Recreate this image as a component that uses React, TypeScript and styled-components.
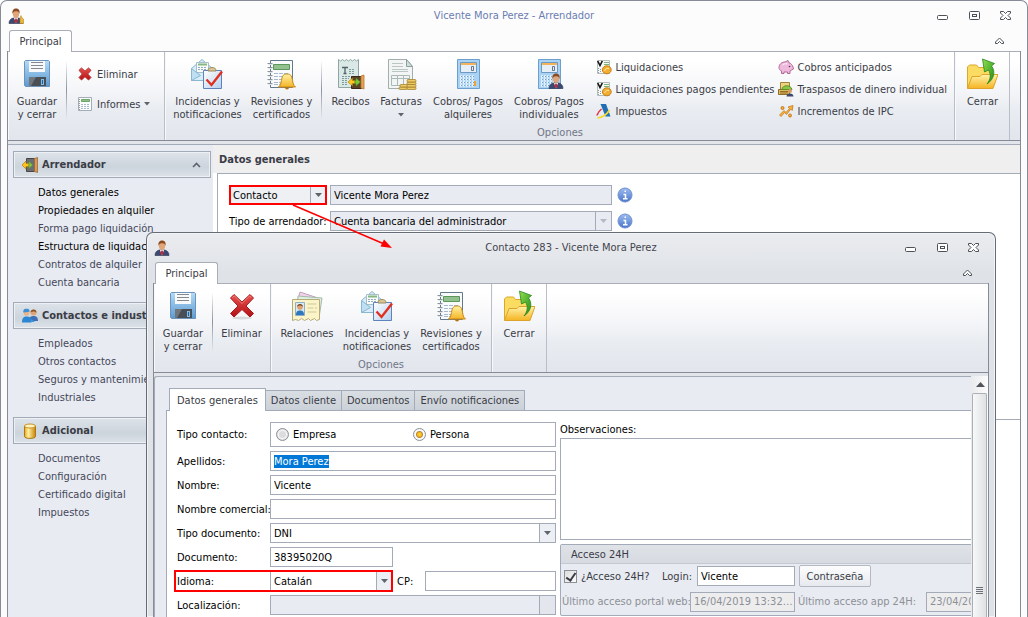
import React, { useEffect, useRef } from "react";
import styled, { createGlobalStyle, css } from "styled-components";

const line = "#a3abb8";
const frameLine = "#878b97";
const ink = "#3a3c46";

const GlobalStyle = createGlobalStyle`
  * { box-sizing: border-box; }
  body {
    margin: 0;
    background: #fff;
    color: ${ink};
    font: 11px/13px "DejaVu Sans Condensed", "Noto Sans", sans-serif;
  }
  button, input, select, textarea { font: inherit; color: inherit; margin: 0; }
  ::selection { background: #0078d7; color: #fff; }
`;

/* ---------- window chrome ---------- */

const Desktop = styled.div`
  position: relative;
  display: flex;
  min-height: 100vh;
  overflow: hidden;
`;

const Frame = styled.section<{ $dialog?: boolean }>`
  display: flex;
  flex-direction: column;
  min-width: 0;
  padding: 0 6px;
  border: 1px solid ${frameLine};
  border-bottom: 0;
  border-radius: 7px 7px 0 0;
  background: #fcfcfd;
  ${(p) =>
    p.$dialog
      ? css`
          position: absolute;
          top: 232px;
          left: 146px;
          right: 32px;
          bottom: 0;
          overflow: hidden;
          border-color: #666c76;
          background: linear-gradient(#ebecf0, #dfe3e7 40px);
          box-shadow: inset 0 0 0 1px #f3f4f7;
        `
      : css`
          flex: 1;
        `}
`;

const TitleBar = styled.header`
  display: grid;
  grid-template-columns: 90px 1fr 90px;
  align-items: center;
  height: 29px;
`;

const TitleText = styled.h1<{ $dialog?: boolean }>`
  margin: 0;
  font-size: 11px;
  font-weight: normal;
  text-align: center;
  color: ${(p) => (p.$dialog ? "#43454f" : "#6b7db1")};
`;

const AppIcon = styled.span`
  padding-left: 1px;
  line-height: 0;
`;

const WindowButtons = styled.div`
  display: flex;
  justify-content: flex-end;
  gap: 16px;
  padding-right: 8px;
`;

const GlyphButton = styled.button`
  display: flex;
  padding: 0;
  border: 0;
  background: none;
`;

const TabStrip = styled.nav`
  display: flex;
  justify-content: space-between;
  align-items: center;
  height: 21px;
  padding: 0 16px 0 2px;
`;

const RibbonTab = styled.button`
  z-index: 1;
  height: 22px;
  width: 63px;
  padding: 0;
  margin-bottom: -1px;
  border: 1px solid #a9adb8;
  border-bottom: 0;
  border-radius: 3px 3px 0 0;
  background: #fff;
`;

const Client = styled.div`
  display: flex;
  flex-direction: column;
  flex: 1;
  min-height: 0;
  border: solid ${frameLine};
  border-width: 0 1px;
  background: #e2e5ea;
`;

/* ---------- ribbon ---------- */

const Ribbon = styled.div`
  display: flex;
  flex: none;
  height: 90px;
  border: solid ${frameLine};
  border-width: 1px 0;
  border-top-color: #a9adb8;
  background: linear-gradient(#fff 10%, #f4f5f8 45%, #e9ecf1 65%, #e2e5eb);
`;

const RibbonGroup = styled.div`
  display: flex;
  flex-direction: column;
  justify-content: space-between;
  flex: none;
  padding-bottom: 1px;
  border-right: 1px solid #b9bec8;
  box-shadow: inset 1px 0 #f8f9fb;
`;

const RibbonItems = styled.div`
  display: flex;
  height: 72px;
  padding: 6px 4px 0;
`;

const GroupCaption = styled.div`
  text-align: center;
  color: #6f7688;
`;

const BigButton = styled.button<{ $width: number }>`
  display: flex;
  flex-direction: column;
  align-items: center;
  gap: 5px;
  flex: none;
  width: ${(p) => p.$width}px;
  padding: 0;
  border: 0;
  background: none;
  white-space: pre;
  svg { flex: none; }
`;

const Separator = styled.span`
  flex: none;
  width: 1px;
  height: 60px;
  margin: 2px 4px 0;
  background: linear-gradient(transparent, #8d93a0 50%, transparent);
`;

const SmallColumn = styled.div`
  display: flex;
  flex-direction: column;
  align-items: flex-start;
  gap: 14px;
  padding: 8px 10px 0 7px;
`;

const CommandGrid = styled.div`
  display: grid;
  grid-template-columns: 182px 172px;
  grid-auto-rows: 22px;
  align-items: center;
  padding: 0 0 0 7px;
  margin-top: -2px;
`;

const SmallButton = styled.button`
  display: flex;
  align-items: center;
  gap: 3px;
  height: 16px;
  padding: 0;
  border: 0;
  background: none;
  white-space: nowrap;
  svg { flex: none; }
`;

const MenuMark = styled.span`
  display: flex;
  padding-left: 1px;
`;

/* ---------- main window body ---------- */

const Workspace = styled.div`
  display: grid;
  grid-template-columns: 205px 1fr;
  flex: 1;
  margin-top: 3px;
  border-top: 1px solid ${line};
  background: #fff;
`;

const Sidebar = styled.aside`
  padding: 6px 2px 0 5px;
  background: #e8ebf1;
`;

const NavHeader = styled.h2`
  display: flex;
  align-items: center;
  gap: 4px;
  height: 27px;
  margin: 0 0 6px;
  padding: 0 9px 0 8px;
  border: 1px solid ${line};
  background: linear-gradient(#dde3e9, #ccd4dc 60%, #dce2e8);
  box-shadow: inset 0 0 0 1px #eef1f4;
  font-size: 11px;
  white-space: nowrap;
  overflow: hidden;
  svg { flex: none; }
  svg:last-child:not(:first-child) { margin-left: auto; }
`;

const NavList = styled.ul`
  margin: 0 0 10px;
  padding: 0 0 0 25px;
  list-style: none;
`;

const NavLink = styled.a<{ $strong?: boolean }>`
  display: block;
  line-height: 18px;
  white-space: nowrap;
  text-decoration: none;
  color: ${(p) => (p.$strong ? "#000" : "#45475a")};
`;

const Main = styled.main`
  display: flex;
  flex-direction: column;
  padding-left: 4px;
  background: linear-gradient(#efefef 28px, #fff 28px);
`;

const MainTitle = styled.h2`
  height: 28px;
  margin: 0;
  padding-left: 2px;
  font-size: 11px;
  line-height: 30px;
`;

const MainPanel = styled.div`
  display: grid;
  grid-template-columns: 98px 282px 18px;
  grid-auto-rows: 20px;
  gap: 6px 3px;
  align-content: start;
  align-items: center;
  min-height: 247px;
  padding: 11px 0 0 11px;
  border: solid ${line};
  border-width: 1px 0 1px 1px;
  color: #000;
  > svg { justify-self: end; }
`;

/* ---------- form controls ---------- */

const fieldSkin = css<{ $muted?: boolean }>`
  width: 100%;
  min-width: 0;
  height: 20px;
  padding: 0 3px;
  border: 1px solid ${line};
  border-radius: 0;
  outline: 0;
  background: ${(p) => (p.$muted ? "#e8ebf1" : "#fff")};
  color: #000;
`;

const TextBox = styled.input<{ $muted?: boolean }>`
  ${fieldSkin}
  &:disabled {
    padding-right: 0;
    background: #ededee;
    color: #8d9097;
    text-overflow: ellipsis;
  }
`;

const SelectWrap = styled.span<{ $faded?: boolean }>`
  display: grid;
  width: 100%;
  > * { grid-area: 1 / 1; }
  > svg {
    justify-self: end;
    width: 17px;
    height: 20px;
    pointer-events: none;
    color: ${(p) => (p.$faded ? "#b4b8c0" : "#5f646d")};
  }
`;

const SelectBox = styled.select<{ $muted?: boolean; $tone?: string }>`
  ${fieldSkin}
  appearance: none;
  background: linear-gradient(
    to left,
    ${(p) => (p.$muted ? "#e8ebf1" : "#eceff3")} 15px,
    ${line} 15px,
    ${line} 16px,
    ${(p) => p.$tone ?? (p.$muted ? "#e8ebf1" : "#fff")} 16px
  );
`;

const Highlight = styled.span<{ $inset: string }>`
  position: absolute;
  inset: ${(p) => p.$inset};
  border: 2px solid #f00;
  pointer-events: none;
`;

const Anchor = styled.div`
  position: relative;
  display: flex;
`;

/* ---------- dialog body ---------- */

const DialogBody = styled.div`
  display: flex;
  flex: 1;
  min-height: 0;
  margin-top: 3px;
`;

const Viewport = styled.div`
  flex: 1;
  min-width: 0;
  overflow: hidden;
  padding: 11px 0 0 11px;
  border: 1px solid ${line};
  border-width: 1px 0 0 1px;
  border-top-left-radius: 3px;
  background: #e8ebf1;
`;

const PageTabs = styled.div`
  display: flex;
  align-items: flex-end;
  padding-left: 3px;
`;

const PageTab = styled.button<{ $active?: boolean }>`
  z-index: ${(p) => (p.$active ? 1 : 0)};
  height: ${(p) => (p.$active ? 23 : 20)}px;
  margin: 0 -1px ${(p) => (p.$active ? -1 : 0)}px 0;
  padding: 0 ${(p) => (p.$active ? 7 : 5)}px;
  border: 1px solid ${line};
  border-bottom: 0;
  white-space: nowrap;
  background: ${(p) => (p.$active ? "#fff" : "linear-gradient(#d9dee3, #cbd1d8)")};
`;

const Page = styled.div`
  display: flex;
  align-items: flex-start;
  gap: 4px;
  width: max-content;
  min-height: 100%;
  padding: 11px 0 0 10px;
  border: 1px solid ${line};
  background: #fff;
  color: #000;
`;

const FormColumn = styled.div`
  display: flex;
  flex-direction: column;
  gap: 4px;
  width: 379px;
`;

const Field = styled.div`
  display: grid;
  grid-template-columns: 93px 1fr;
  align-items: center;
`;

const FieldLabel = styled.label`
  white-space: nowrap;
`;

const Short = styled.div`
  width: 123px;
`;

const SplitRow = styled.div`
  display: grid;
  grid-template-columns: 123px 24px 131px;
  gap: 0 4px;
  align-items: center;
`;

const RadioBox = styled.div`
  display: flex;
  height: 25px;
  padding: 0 5px;
  border: 1px solid ${line};
`;

const RadioLabel = styled.label`
  display: flex;
  align-items: center;
  gap: 4px;
  flex: 1;
`;

const Radio = styled.input`
  appearance: none;
  width: 13px;
  height: 13px;
  border: 1px solid #8d9096;
  border-radius: 50%;
  background: radial-gradient(#dcdcdc 3px, #f5f5f5 4px, #d0d2d5 6px);
  &:checked {
    background: radial-gradient(#ffd84a 0, #f6b81c 2px, #b5863a 3px, #fff 4px, #f0f1f3 6px);
  }
`;

const BrowseField = styled.div`
  display: grid;
  grid-template-columns: 1fr 16px;
`;

const BrowseButton = styled.button`
  height: 20px;
  width: 17px;
  margin-left: -1px;
  border: 1px solid ${line};
  background: #e3e7ed;
`;

const SideColumn = styled.div`
  display: flex;
  flex-direction: column;
  width: 560px;
`;

const Notes = styled.textarea`
  ${fieldSkin}
  height: 102px;
  margin-bottom: 4px;
  resize: none;
  display: block;
`;

const NotesLabel = styled.label`
  line-height: 16px;
`;

const AccessGroup = styled.fieldset`
  margin: 0;
  padding: 0;
  min-width: 0;
  border: 1px solid ${line};
  border-radius: 2px;
  background: #e8ebf1;
  color: ${ink};
`;

const AccessTitle = styled.div`
  height: 19px;
  padding-left: 10px;
  line-height: 19px;
  border-bottom: 1px solid #c4c9d1;
  background: linear-gradient(#dfe3e8, #d7dbe1);
`;

const AccessRow = styled.div<{ $dim?: boolean }>`
  display: grid;
  grid-template-columns: ${(p) => (p.$dim ? "125px 105px 125px 105px" : "94px 31px 98px 72px")};
  gap: 0 ${(p) => (p.$dim ? 3 : 4)}px;
  align-items: center;
  height: ${(p) => (p.$dim ? 27 : 24)}px;
  padding: 0 1px 0 ${(p) => (p.$dim ? 1 : 3)}px;
  white-space: nowrap;
  color: ${(p) => (p.$dim ? "#8d9097" : "inherit")};
`;

const CheckLabel = styled.label`
  display: flex;
  align-items: center;
  gap: 4px;
`;

const CheckBox = styled.input`
  appearance: none;
  display: grid;
  place-items: center;
  width: 13px;
  height: 13px;
  border: 1px solid #8d9096;
  background: linear-gradient(135deg, #dcdcdc, #fbfbfb);
  &:checked::after {
    content: "";
    width: 4px;
    height: 8px;
    margin-bottom: 2px;
    border: solid #3a3c46;
    border-width: 0 2px 2px 0;
    transform: rotate(35deg);
  }
`;

const PlainButton = styled.button`
  height: 22px;
  padding: 0;
  border: 1px solid #b3b8c2;
  border-radius: 2px;
  background: linear-gradient(#fdfdfe, #e6e9ee);
`;

const ScrollTrack = styled.div`
  display: flex;
  flex-direction: column;
  flex: none;
  width: 17px;
  padding-left: 1px;
  background: linear-gradient(to right, #e9eaec, #fcfcfc);
`;

const ScrollUp = styled.button`
  display: grid;
  place-items: center;
  height: 17px;
  padding: 0;
  border: 0;
  background: none;
`;

const ScrollThumb = styled.div`
  flex: 1;
  width: 15px;
  padding: 193px 3px 0;
  border: 1px solid #abb0b8;
  border-bottom: 0;
  border-radius: 2px 2px 0 0;
  background: linear-gradient(to right, #f7f8f8, #dfe1e3);
  line-height: 0;
`;

const Callout = styled.svg`
  position: absolute;
  left: 285px;
  top: 200px;
  pointer-events: none;
`;

const GradientDefs = styled.svg`
  position: absolute;
`;

/* ---------- icons ---------- */

const Defs = () => (
  <GradientDefs width="0" height="0" aria-hidden="true">
    <defs>
      <linearGradient id="gBlue" x1="0" y1="0" x2="0" y2="1">
        <stop offset="0" stopColor="#b4dbf6" />
        <stop offset="1" stopColor="#5c9ad2" />
      </linearGradient>
      <linearGradient id="gPale" x1="0" y1="0" x2="1" y2="1">
        <stop offset="0" stopColor="#ffffff" />
        <stop offset="1" stopColor="#b4d0f0" />
      </linearGradient>
      <linearGradient id="gGold" x1="0" y1="0" x2="0" y2="1">
        <stop offset="0" stopColor="#fff3a6" />
        <stop offset="1" stopColor="#f5b324" />
      </linearGradient>
      <linearGradient id="gGoldH" x1="0" y1="0" x2="1" y2="0">
        <stop offset="0" stopColor="#e8a81e" />
        <stop offset=".35" stopColor="#fff0a0" />
        <stop offset="1" stopColor="#c98408" />
      </linearGradient>
      <linearGradient id="gGreen" x1="0" y1="0" x2="1" y2="1">
        <stop offset="0" stopColor="#8fe04a" />
        <stop offset="1" stopColor="#1d8a1a" />
      </linearGradient>
      <linearGradient id="gRed" x1="0" y1="0" x2="0" y2="1">
        <stop offset="0" stopColor="#e8524e" />
        <stop offset="1" stopColor="#b30f14" />
      </linearGradient>
      <linearGradient id="gInfo" x1="0" y1="0" x2="0" y2="1">
        <stop offset="0" stopColor="#9dbdf0" />
        <stop offset="1" stopColor="#4a76ca" />
      </linearGradient>
    </defs>
  </GradientDefs>
);

const Svg = ({ s = 32, children }: { s?: number; children: React.ReactNode }) => (
  <svg width={s} height={s} viewBox={`0 0 ${s} ${s}`} fill="none" aria-hidden="true">
    {children}
  </svg>
);

const SaveIcon = () => (
  <Svg>
    <path d="M4.500 2.500h23l1 1v25h-24l-1-1v-24z" fill="url(#gBlue)" stroke="#6c93bb" />
    <path d="M8 3h16v11H8z" fill="#f8f9fa" />
    <path d="M10 4.500h12M10 7.500h12M10 10.500h12" stroke="#85898e" />
    <path d="M8 19h17v9H8z" fill="#4a4f55" />
    <path d="M8 19h7l-5 9H8z" fill="#71767c" />
    <path d="M20 21h3v6h-3z" fill="#7dbdf0" />
    <path d="M21 22h1v4h-1z" fill="#2b5d8a" />
  </Svg>
);

const CrossIcon = () => (
  <Svg>
    <ellipse cx="16" cy="28" rx="10" ry="1.500" fill="#000" opacity=".12" />
    <path
      d="M8 4.500l8 7.500 8-7.500 3.500 3.500-7.500 8 7.500 7.500-3.500 3.500-8-7.500-8 7.500-3.500-3.500 7.500-7.500-7.500-8z"
      fill="url(#gRed)"
      stroke="#a8181c"
      strokeLinejoin="round"
    />
    <path d="M6.500 7.500l2-1.500 7.500 7.500 7.500-7.500 2 1.500" stroke="#f59a94" opacity=".7" />
  </Svg>
);

const DeleteSmall = () => (
  <Svg s={16}>
    <path d="M3.500 2L7 5.200 10.500 2 13 4.300 9.700 8 13 11.500 10.500 14 7 10.700 3.500 14 1 11.500 4.300 8 1 4.300z" fill="url(#gRed)" stroke="#b3302e" />
  </Svg>
);

const ReportIcon = () => (
  <Svg s={16}>
    <path d="M.5 1.500h13v13H.5z" fill="#fbfcfd" stroke="#a3adb8" />
    <path d="M3.500 3.500h8v2h-8z" fill="#8fbf8a" stroke="#6ba568" />
    <path d="M3 8.500h9M3 10.500h9M3 12.500h9" stroke="#a9b8cb" strokeDasharray="2 1" />
    <path d="M1.500 3v11" stroke="#999" strokeDasharray="1 1" />
  </Svg>
);

const MailCheckIcon = () => (
  <Svg>
    <path d="M.5 10.500L11 1.500l10.500 9v12H.5z" fill="#d7eefa" stroke="#8ab6d0" />
    <path d="M5.500 4.500h12v10h-12z" fill="#f8fbf8" stroke="#a5c0cc" />
    <path d="M7 6.500h9" stroke="#86b683" strokeWidth="2" />
    <path d="M7 9.500h9M7 11.500h9" stroke="#93abc0" strokeDasharray="2 1" />
    <path d="M.5 10.500l9 7-9 5zM21.500 10.500l-8 6.500" fill="#bfe0f3" stroke="#8ab6d0" />
    <path d="M12.500 12.500h18v18h-18z" fill="url(#gPale)" stroke="#5f82bc" />
    <path d="M17 13c0-3 2-3.500 4-3.500s4 .5 4 3.500z" fill="#d9c795" stroke="#9c8b5c" />
    <path d="M15.500 21.500l5 5.500L31 13.500" stroke="#e0301f" strokeWidth="2.400" />
  </Svg>
);

const BellReportIcon = () => (
  <Svg>
    <path d="M5.500 2.500h22v27h-22z" fill="#f8fafc" stroke="#64788c" />
    <path d="M2.500 5.500h5M2.500 9.500h5M2.500 13.500h5M2.500 17.500h5M2.500 21.500h5M2.500 25.500h5" stroke="#8a949d" />
    <path d="M3.500 6.500h4M3.500 10.500h4M3.500 14.500h4M3.500 18.500h4M3.500 22.500h4M3.500 26.500h4" stroke="#dfe3e7" />
    <path d="M8.500 6.500h16v5h-16z" fill="#93c08f" stroke="#5a9759" />
    <path d="M9 15.500h15M9 18.500h15M9 21.500h15M9 24.500h15M9 26.500h15" stroke="#a6b9cf" strokeDasharray="4 1" />
    <path d="M13.500 29c3-2 2.500-6 3.500-9 1-3.500 2.500-4 5-4s4 .5 5 4c1 3 .5 7 3.500 9z" fill="url(#gGold)" stroke="#c98a18" />
    <path d="M20 29.500a2 2 0 0 0 4 0z" fill="#b4730c" />
  </Svg>
);

const ReceiptIcon = () => (
  <Svg>
    <path d="M4.500 1.500l2 1.500 2-1.500 2 1.500 2-1.500 2 1.500 2-1.500 2 1.500 2-1.500 2 1.500 2-1.500v28h-20z" fill="#dbe9e6" stroke="#8fa5a3" />
    <path d="M8 9.500h6M11 9.500v6M9.500 15.500h3" stroke="#4d6468" strokeWidth="1.300" />
    <path d="M15 11.500h6M15 13.500h6M15 15.500h6M8 18.500h13M8 20.500h7M8 22.500h6M8 24.500h6M8 26.500h6" stroke="#7f9c9c" strokeDasharray="2 1" />
    <path d="M17.500 18.500h10v12h-10z" fill="#5a4228" stroke="#3a2818" />
    <path d="M27 18l3-1v14l-3-1z" fill="#e8a256" stroke="#b87633" strokeWidth=".8" />
    <path d="M14 24l4.500-4v2.500h2.500v3h-2.500V28z" fill="#ffc522" stroke="#a97a0c" strokeWidth=".6" />
    <path d="M21 22.500h1V20l4.500 4-4.500 4v-2.500h-1z" fill="#7cc73a" stroke="#4f8a20" strokeWidth=".6" />
  </Svg>
);

const InvoiceIcon = () => (
  <Svg>
    <path d="M3.500 1.500h18l6 7v22h-24z" fill="#f3f5f4" stroke="#a3afad" />
    <path d="M21.500 1.500v7h6z" fill="#cfe0dc" stroke="#8ba09c" />
    <path d="M7 5.500h11M7 8.500h11M7 11.500h16M7 13.500h16" stroke="#b9c6c3" />
    <path d="M6.500 17.500h18v10h-18zM6.500 20.500h18M12.500 17.500v10M18.500 17.500v10" stroke="#aab9b6" />
    <g fill="#edc963" stroke="#9c7a28" strokeWidth=".7">
      <rect x="14" y="29" width="8" height="2.500" rx="1" />
      <rect x="15" y="26.500" width="8" height="2.500" rx="1" />
      <rect x="22" y="29" width="9" height="2.500" rx="1" />
      <rect x="22" y="26.500" width="9" height="2.500" rx="1" />
      <rect x="22" y="24" width="9" height="2.500" rx="1" />
      <rect x="22" y="21.500" width="9" height="2.500" rx="1" />
    </g>
  </Svg>
);

const CalcBody = () => (
  <>
    <path d="M5.500 1.500h22v29h-22z" fill="#a9d2f3" stroke="#6b9fd0" />
    <path d="M8.500 4.500h16v10h-16z" fill="#e6eff7" stroke="#6f98c2" />
    <path d="M9 5h15v2H9z" fill="#f3b25c" />
    <path d="M19.500 8.500h2v4h-2z" stroke="#66758c" />
    <path d="M8 18.500h15M8 21.500h15M8 24.500h15M8 27.500h15" stroke="#fff" strokeWidth="2" strokeDasharray="2 1" />
    <path d="M9 18.500h15M9 21.500h15M9 24.500h15M9 27.500h15" stroke="#6da0d2" strokeDasharray="1 2" />
    <path d="M22 23h2v5h-2z" fill="#f2a233" />
  </>
);

const Person = ({ coin }: { coin?: boolean }) => (
  <>
    <path d="M1 15.500c0-3.500 2-5 4.500-5.500h5c2.500.5 4.500 2 4.500 5.500z" fill="#3b4a72" stroke="#28324f" strokeWidth=".6" />
    <path d="M6 10h4l-2 5.500z" fill="#fff" />
    <path d="M7.300 10.500h1.400l.6 3-1.300 2-1.300-2z" fill="#d3222a" />
    <ellipse cx="8" cy="5.500" rx="3.200" ry="4.300" fill="#e2a578" />
    <path d="M4.500 6C4 1.800 5.800.5 8 .5s4.200 1.200 3.500 5.500C11 3.800 10 3.200 8 3.300 6 3.200 5 4 4.500 6z" fill="#8a4b22" />
    {coin && <path d="M12 15.500V10l1-2.500 1 2.500 1.500 1v4.500z" fill="#eab93c" stroke="#b07f1a" strokeWidth=".5" />}
  </>
);

const PersonIcon = ({ coin }: { coin?: boolean }) => (
  <Svg s={16}>
    <Person coin={coin} />
  </Svg>
);

const CalcIcon = ({ person }: { person?: boolean }) => (
  <Svg>
    <CalcBody />
    {person && (
      <g transform="translate(15 15)">
        <Person />
      </g>
    )}
  </Svg>
);

const FolderIcon = () => (
  <Svg>
    <path d="M1.500 30V9l2-2h7l2 2.500h12.500V30z" fill="#fbdc62" stroke="#d9a82c" />
    <path d="M1.500 30.500L6 18.500h8l2-2h16l-5 14z" fill="url(#gGold)" stroke="#dea32a" />
    <path d="M21 26c4-5 4-10 1.500-14l-4 2L16.500 1l12 4.500-3 2.500c4 5 3 13-4.500 18z" fill="url(#gGreen)" stroke="#2b831f" strokeWidth=".8" />
  </Svg>
);

const ContactsIcon = () => (
  <Svg>
    <path d="M9 2l18 6-5 17L4 19z" fill="#f3d3ea" stroke="#bfa3bb" />
    <path d="M7 6l24 2-3 20-22-4z" fill="#dff0e2" stroke="#a6b9a9" />
    <path d="M1.500 9.500h27v20l-3 1-2-2-4 2-2-2-4 2-3-2-3 2-3-1-3 1z" fill="#fbf4c8" stroke="#b5ab78" />
    <path d="M4.500 12.500h9v13h-9z" fill="#d4eaf8" stroke="#8db0c6" />
    <path d="M5 25c0-4 2-4.500 4-4.500s4 .5 4 4.500z" fill="#2f77bd" />
    <circle cx="9" cy="17" r="2.800" fill="#e0a070" />
    <path d="M6 17c0-4 6-4 6 0-1-2-5-2-6 0z" fill="#7c451d" />
    <path d="M16.500 14h9M16.500 18h6M24 18h2M16.500 22h9" stroke="#cfc796" />
  </Svg>
);

const SettleIcon = () => (
  <Svg s={16}>
    <path d="M1.500 1.500h12v13h-12z" fill="#f5f8f6" stroke="#b4bdb9" />
    <path d="M1.700 2l2.300 4.500L6.300 2" stroke="#111" strokeWidth="1.600" />
    <path d="M8 3.500h5M8 5.500h5" stroke="#7db27b" />
    <path d="M2.500 9v6M4 10.500h2M4 12.500h2" stroke="#8d9aa2" strokeDasharray="1 1" />
    <ellipse cx="10.800" cy="10.800" rx="4.400" ry="4" fill="#f5ad30" stroke="#c07d18" />
    <path d="M8.500 12c1-2.500 3-3 4.500-2.500" stroke="#fff0b0" />
  </Svg>
);

const TaxIcon = () => (
  <Svg s={16}>
    <path d="M4.500 1h5.500L14.500 13.500H9.500z" fill="#1f6fb2" />
    <path d="M.800 12.500C2 9.500 3.500 7.500 5.500 6" stroke="#e23340" strokeWidth="1.500" />
    <path d="M1.500 15c5-.5 9-3 12-8" stroke="#f4d928" strokeWidth="1.600" />
  </Svg>
);

const PigIcon = () => (
  <Svg s={16}>
    <path d="M1 8.500C1 5 4 3 7 3l3-1.500.8 2C13 4.500 14.500 6 15 8l.5 2-1.800 1-1.700 1v2.500H9.500V13H6v1.500H3.500V12C2 11.500 1 10 1 8.500z" fill="#efb9dc" stroke="#b06a98" />
    <path d="M4.500 6c1-1 3-1.500 4.500-1" stroke="#fff" />
    <circle cx="11.500" cy="7.500" r=".8" fill="#5f2c50" />
  </Svg>
);

const TransferIcon = () => (
  <Svg s={16}>
    <path d="M2.500 1.500h9v7h-9z" fill="#ecd47d" stroke="#a4803a" />
    <path d="M.5 8.500h11v5H.5z" fill="#dfbc5e" stroke="#8f6b26" />
    <path d="M2 10.500h8M2 12h8" stroke="#8f6b26" />
    <path d="M4 8.500c0-5 9-5 10 0z" fill="#8cc544" stroke="#5d8e2b" />
    <circle cx="12" cy="10" r="2" fill="#d49a68" />
    <path d="M8.500 15.500c0-4 7-4 7 0z" fill="#3c476c" />
  </Svg>
);

const IncreaseIcon = () => (
  <Svg s={16}>
    <path d="M1.500 12L6 7.500l2 2 3.500-4L10 4l5-1.500-.8 5L12.800 6 8.500 11.500l-2-2L3 13.500z" fill="#f7b23a" stroke="#c67a1c" strokeWidth=".8" />
    <circle cx="4.500" cy="5" r="1.500" fill="#f5ad3c" stroke="#c67a1c" />
    <circle cx="12" cy="12.500" r="1.500" fill="#f5ad3c" stroke="#c67a1c" />
  </Svg>
);

const DoorIcon = () => (
  <Svg s={16}>
    <path d="M4.500 1.500h8v13h-8z" fill="#6a6e72" stroke="#4b4640" />
    <path d="M12.500 1.500l3-1v15l-3-1z" fill="#d99a55" stroke="#a06a34" strokeWidth=".8" />
    <path d="M0 8l4-4v2.500h3v3H4V12z" fill="#ffc322" stroke="#b5830f" strokeWidth=".7" />
    <path d="M7 6.500h0V4.500l3.500 3.500L7 11.500z" fill="#8acb42" stroke="#5b9428" strokeWidth=".7" />
  </Svg>
);

const PeopleIcon = () => (
  <Svg s={16}>
    <circle cx="11.500" cy="4.500" r="3" fill="#dfa57a" />
    <path d="M8.500 4.500c0-4 6.500-4 6 .5-1-2-4-2-6-.5z" fill="#8c5426" />
    <path d="M7 13c0-4 2-5 4.500-5s4.500 1 4.500 5z" fill="#3f6fb5" />
    <circle cx="4.500" cy="5" r="2.800" fill="#e7b48b" />
    <path d="M1.300 4.500C1 1 3 .8 4.500.8s3.500.5 3 3z" fill="#3f8fd4" />
    <path d="M0 14.500c0-5 2-6 4.500-6 3 0 5 1 5 6z" fill="#2d86d2" />
    <path d="M9 11l4 3H9z" fill="#3a9ae0" />
  </Svg>
);

const DrumIcon = () => (
  <Svg s={16}>
    <path d="M2.500 3v10.500c0 2.500 11 2.500 11 0V3z" fill="url(#gGoldH)" stroke="#ad7712" />
    <ellipse cx="8" cy="3" rx="5.500" ry="2" fill="#fff4bf" stroke="#c9932b" />
  </Svg>
);

const InfoIcon = () => (
  <Svg s={16}>
    <circle cx="8" cy="8" r="7" fill="url(#gInfo)" stroke="#6f8fcf" />
    <path d="M6.500 7.500h2v4M6 11.700h4.500" stroke="#fff" strokeWidth="1.500" />
    <path d="M7.500 3.500h1.500V5H7.500z" fill="#fff" />
  </Svg>
);

const Caret = () => (
  <svg viewBox="0 0 17 20" aria-hidden="true">
    <path d="M5 8h7l-3.500 4z" fill="currentColor" />
  </svg>
);

const DownMark = () => (
  <svg width="6" height="4" viewBox="0 0 6 4" aria-hidden="true">
    <path d="M0 0h6L3 3.500z" fill="#5f646d" />
  </svg>
);

const HeaderChevron = () => (
  <svg width="9" height="6" viewBox="0 0 9 6" fill="none" aria-hidden="true">
    <path d="M1 5l3.500-3.500L8 5" stroke="#5c636e" strokeWidth="1.600" />
  </svg>
);

const glyph = "#4b5157";

const WindowControls = () => (
  <WindowButtons>
    <GlyphButton aria-label="Minimizar">
      <svg width="16" height="11" viewBox="0 0 16 11" fill="none">
        <rect x="2.500" y="5.500" width="10" height="4" rx="1" fill="#fff" stroke={glyph} />
      </svg>
    </GlyphButton>
    <GlyphButton aria-label="Maximizar">
      <svg width="16" height="11" viewBox="0 0 16 11" fill="none">
        <rect x="2.500" y="1.500" width="10" height="8" rx="1" fill="#fff" stroke={glyph} />
        <rect x="5.500" y="4.500" width="4" height="2" stroke={glyph} />
      </svg>
    </GlyphButton>
    <GlyphButton aria-label="Cerrar ventana">
      <svg width="14" height="11" viewBox="0 0 14 11" fill="none">
        <path d="M1.500 1.500h3L6.500 3.500l2-2h3v1.500L9 5.500l2.500 2.500v1.500h-3l-2-2-2 2h-3V8L4 5.500 1.500 3z" fill="#fff" stroke={glyph} />
      </svg>
    </GlyphButton>
  </WindowButtons>
);

const CollapseGlyph = () => (
  <svg width="11" height="8" viewBox="0 0 11 8" fill="none">
    <path d="M5.500 1L9.500 5v1.500H7.500l-2-2-2 2h-2V5z" fill="#fff" stroke={glyph} />
  </svg>
);

/* ---------- building blocks ---------- */

type WindowProps = { title: string; dialog?: boolean; icon: React.ReactNode; children: React.ReactNode };

const AppWindow = ({ title, dialog, icon, children }: WindowProps) => (
  <Frame $dialog={dialog}>
    <TitleBar>
      <AppIcon>{icon}</AppIcon>
      <TitleText $dialog={dialog}>{title}</TitleText>
      <WindowControls />
    </TitleBar>
    <TabStrip>
      <RibbonTab>Principal</RibbonTab>
      <GlyphButton aria-label="Contraer la cinta">
        <CollapseGlyph />
      </GlyphButton>
    </TabStrip>
    <Client>{children}</Client>
  </Frame>
);

type CommandProps = { icon: React.ReactNode; label: string; width: number; menu?: boolean };

const Command = ({ icon, label, width, menu }: CommandProps) => (
  <BigButton $width={width}>
    {icon}
    <span>{label}</span>
    {menu && <DownMark />}
  </BigButton>
);

const Small = ({ icon, label, menu }: { icon: React.ReactNode; label: string; menu?: boolean }) => (
  <SmallButton>
    {icon}
    <span>{label}</span>
    {menu && (
      <MenuMark>
        <DownMark />
      </MenuMark>
    )}
  </SmallButton>
);

type NavItem = { label: string; strong?: boolean };

const NavGroup = ({ title, icon, open, items }: { title: string; icon: React.ReactNode; open?: boolean; items: NavItem[] }) => (
  <section>
    <NavHeader>
      {icon}
      <span>{title}</span>
      {open && <HeaderChevron />}
    </NavHeader>
    <NavList>
      {items.map((item) => (
        <li key={item.label}>
          <NavLink href="#" $strong={item.strong}>
            {item.label}
          </NavLink>
        </li>
      ))}
    </NavList>
  </section>
);

type ChoiceProps = { id?: string; label?: string; value: string; muted?: boolean; faded?: boolean; tone?: string };

const Choice = ({ id, label, value, muted, faded, tone }: ChoiceProps) => (
  <SelectWrap $faded={faded}>
    <SelectBox id={id} aria-label={label} $muted={muted} $tone={tone} defaultValue={value}>
      <option>{value}</option>
    </SelectBox>
    <Caret />
  </SelectWrap>
);

/* ---------- screens ---------- */

const LandlordWindow = () => (
  <AppWindow title="Vicente Mora Perez - Arrendador" icon={<PersonIcon coin />}>
    <Ribbon>
      <RibbonGroup>
        <RibbonItems>
          <Command icon={<SaveIcon />} label={"Guardar\ny cerrar"} width={50} />
          <Separator />
          <SmallColumn>
            <Small icon={<DeleteSmall />} label="Eliminar" />
            <Small icon={<ReportIcon />} label="Informes" menu />
          </SmallColumn>
        </RibbonItems>
      </RibbonGroup>
      <RibbonGroup>
        <RibbonItems>
          <Command icon={<MailCheckIcon />} label={"Incidencias y\nnotificaciones"} width={76} />
          <Command icon={<BellReportIcon />} label={"Revisiones y\ncertificados"} width={72} />
          <Separator />
          <Command icon={<ReceiptIcon />} label="Recibos" width={48} />
          <Command icon={<InvoiceIcon />} label="Facturas" width={53} menu />
          <Command icon={<CalcIcon />} label={"Cobros/ Pagos\nalquileres"} width={81} />
          <Command icon={<CalcIcon person />} label={"Cobros/ Pagos\nindividuales"} width={81} />
          <CommandGrid>
            <Small icon={<SettleIcon />} label="Liquidaciones" />
            <Small icon={<PigIcon />} label="Cobros anticipados" />
            <Small icon={<SettleIcon />} label="Liquidaciones pagos pendientes" />
            <Small icon={<TransferIcon />} label="Traspasos de dinero individual" />
            <Small icon={<TaxIcon />} label="Impuestos" />
            <Small icon={<IncreaseIcon />} label="Incrementos de IPC" />
          </CommandGrid>
        </RibbonItems>
        <GroupCaption>Opciones</GroupCaption>
      </RibbonGroup>
      <RibbonGroup>
        <RibbonItems>
          <Command icon={<FolderIcon />} label="Cerrar" width={46} />
        </RibbonItems>
      </RibbonGroup>
    </Ribbon>
    <Workspace>
      <Sidebar>
        <NavGroup
          title="Arrendador"
          icon={<DoorIcon />}
          open
          items={[
            { label: "Datos generales", strong: true },
            { label: "Propiedades en alquiler", strong: true },
            { label: "Forma pago liquidación" },
            { label: "Estructura de liquidación", strong: true },
            { label: "Contratos de alquiler" },
            { label: "Cuenta bancaria" },
          ]}
        />
        <NavGroup
          title="Contactos e industriales"
          icon={<PeopleIcon />}
          items={[
            { label: "Empleados" },
            { label: "Otros contactos" },
            { label: "Seguros y mantenimiento" },
            { label: "Industriales" },
          ]}
        />
        <NavGroup
          title="Adicional"
          icon={<DrumIcon />}
          items={[
            { label: "Documentos" },
            { label: "Configuración" },
            { label: "Certificado digital" },
            { label: "Impuestos" },
          ]}
        />
      </Sidebar>
      <Main>
        <MainTitle>Datos generales</MainTitle>
        <MainPanel>
          <Anchor>
            <Choice label="Contacto" value="Contacto" tone="#eef0f4" />
            <Highlight $inset="0" />
          </Anchor>
          <TextBox aria-label="Nombre del contacto" $muted defaultValue="Vicente Mora Perez" />
          <InfoIcon />
          <FieldLabel htmlFor="tipo-arrendador">Tipo de arrendador:</FieldLabel>
          <Choice id="tipo-arrendador" value="Cuenta bancaria del administrador" muted faded />
          <InfoIcon />
        </MainPanel>
      </Main>
    </Workspace>
  </AppWindow>
);

const ContactDialog = () => {
  const surname = useRef<HTMLInputElement>(null);
  useEffect(() => {
    surname.current?.focus();
    surname.current?.select();
  }, []);

  return (
    <AppWindow dialog title="Contacto 283 - Vicente Mora Perez" icon={<PersonIcon />}>
      <Ribbon>
        <RibbonGroup>
          <RibbonItems>
            <Command icon={<SaveIcon />} label={"Guardar\ny cerrar"} width={50} />
            <Separator />
            <Command icon={<CrossIcon />} label="Eliminar" width={49} />
          </RibbonItems>
        </RibbonGroup>
        <RibbonGroup>
          <RibbonItems>
            <Command icon={<ContactsIcon />} label="Relaciones" width={64} />
            <Command icon={<MailCheckIcon />} label={"Incidencias y\nnotificaciones"} width={76} />
            <Command icon={<BellReportIcon />} label={"Revisiones y\ncertificados"} width={72} />
          </RibbonItems>
          <GroupCaption>Opciones</GroupCaption>
        </RibbonGroup>
        <RibbonGroup>
          <RibbonItems>
            <Command icon={<FolderIcon />} label="Cerrar" width={46} />
          </RibbonItems>
        </RibbonGroup>
      </Ribbon>
      <DialogBody>
        <Viewport>
          <PageTabs role="tablist">
            <PageTab role="tab" $active>Datos generales</PageTab>
            <PageTab role="tab">Datos cliente</PageTab>
            <PageTab role="tab">Documentos</PageTab>
            <PageTab role="tab">Envío notificaciones</PageTab>
          </PageTabs>
          <Page>
            <FormColumn>
              <Field>
                <span id="tipo-contacto">Tipo contacto:</span>
                <RadioBox role="radiogroup" aria-labelledby="tipo-contacto">
                  <RadioLabel>
                    <Radio type="radio" name="tipo" />
                    Empresa
                  </RadioLabel>
                  <RadioLabel>
                    <Radio type="radio" name="tipo" defaultChecked />
                    Persona
                  </RadioLabel>
                </RadioBox>
              </Field>
              <Field>
                <FieldLabel htmlFor="apellidos">Apellidos:</FieldLabel>
                <TextBox id="apellidos" ref={surname} defaultValue="Mora Perez" />
              </Field>
              <Field>
                <FieldLabel htmlFor="nombre">Nombre:</FieldLabel>
                <TextBox id="nombre" defaultValue="Vicente" />
              </Field>
              <Field>
                <FieldLabel htmlFor="comercial">Nombre comercial:</FieldLabel>
                <TextBox id="comercial" />
              </Field>
              <Field>
                <FieldLabel htmlFor="tipo-doc">Tipo documento:</FieldLabel>
                <Choice id="tipo-doc" value="DNI" />
              </Field>
              <Field>
                <FieldLabel htmlFor="documento">Documento:</FieldLabel>
                <Short>
                  <TextBox id="documento" defaultValue="38395020Q" />
                </Short>
              </Field>
              <Field>
                <FieldLabel htmlFor="idioma">Idioma:</FieldLabel>
                <SplitRow>
                  <Anchor>
                    <Choice id="idioma" value="Catalán" />
                    <Highlight $inset="-1px 0 -1px -96px" />
                  </Anchor>
                  <FieldLabel htmlFor="cp">CP:</FieldLabel>
                  <TextBox id="cp" />
                </SplitRow>
              </Field>
              <Field>
                <FieldLabel htmlFor="localizacion">Localización:</FieldLabel>
                <BrowseField>
                  <TextBox id="localizacion" $muted />
                  <BrowseButton aria-label="Buscar localización" />
                </BrowseField>
              </Field>
            </FormColumn>
            <SideColumn>
              <NotesLabel htmlFor="observaciones">Observaciones:</NotesLabel>
              <Notes id="observaciones" />
              <AccessGroup aria-label="Acceso 24H">
                <AccessTitle>Acceso 24H</AccessTitle>
                <AccessRow>
                  <CheckLabel>
                    <CheckBox type="checkbox" defaultChecked />
                    ¿Acceso 24H?
                  </CheckLabel>
                  <FieldLabel htmlFor="login">Login:</FieldLabel>
                  <TextBox id="login" defaultValue="Vicente" />
                  <PlainButton>Contraseña</PlainButton>
                </AccessRow>
                <AccessRow $dim>
                  <FieldLabel htmlFor="portal">Último acceso portal web:</FieldLabel>
                  <TextBox id="portal" disabled defaultValue="16/04/2019 13:32:15" />
                  <FieldLabel htmlFor="app24">Último acceso app 24H:</FieldLabel>
                  <TextBox id="app24" disabled defaultValue="23/04/2019 10:15:20" />
                </AccessRow>
              </AccessGroup>
            </SideColumn>
          </Page>
        </Viewport>
        <ScrollTrack>
          <ScrollUp aria-label="Subir">
            <svg width="9" height="5" viewBox="0 0 9 5">
              <path d="M0 5h9L4.500 0z" fill="#50545b" />
            </svg>
          </ScrollUp>
          <ScrollThumb>
            <svg width="7" height="8" viewBox="0 0 7 8">
              <path d="M0 .5h7M0 2.500h7M0 4.500h7M0 6.500h7" stroke="#6b6f76" />
            </svg>
          </ScrollThumb>
        </ScrollTrack>
      </DialogBody>
    </AppWindow>
  );
};

export default function App() {
  return (
    <Desktop>
      <GlobalStyle />
      <Defs />
      <LandlordWindow />
      <ContactDialog />
      <Callout width="110" height="50" viewBox="0 0 110 50" aria-hidden="true">
        <path d="M8 5L98 43.500" stroke="#f00" strokeWidth="1.500" />
        <path d="M107 48l-11.500-1.500 3.500-7z" fill="#f00" />
      </Callout>
    </Desktop>
  );
}
